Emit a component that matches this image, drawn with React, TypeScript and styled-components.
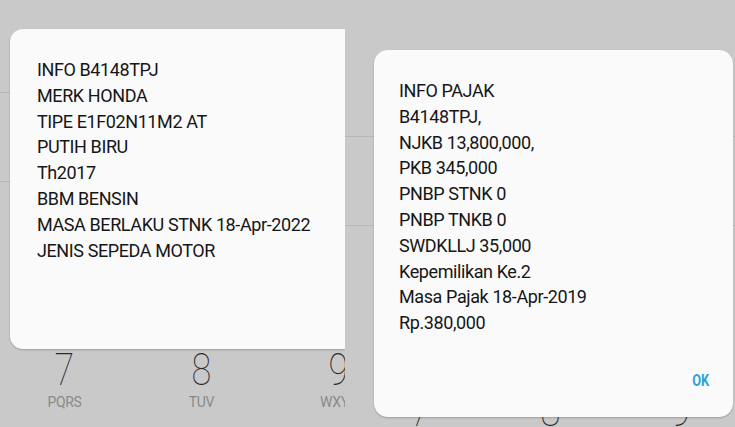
import * as React from 'react';
import styled, { createGlobalStyle } from 'styled-components';

const GlobalStyle = createGlobalStyle`
  html, body {
    margin: 0;
    padding: 0;
    background: #c9c9c9;
  }
  body {
    font-family: Roboto, "Noto Sans", "Liberation Sans", sans-serif;
    -webkit-font-smoothing: antialiased;
  }
`;

interface Key {
  digit: string;
  letters: string;
}

const keys: Key[] = [
  { digit: '7', letters: 'PQRS' },
  { digit: '8', letters: 'TUV' },
  { digit: '9', letters: 'WXYZ' }
];

const vehicleInfo = [
  'INFO B4148TPJ',
  'MERK HONDA',
  'TIPE E1F02N11M2 AT',
  'PUTIH BIRU',
  'Th2017',
  'BBM BENSIN',
  'MASA BERLAKU STNK 18-Apr-2022',
  'JENIS SEPEDA MOTOR'
];

const taxInfo = [
  'INFO PAJAK',
  'B4148TPJ,',
  'NJKB 13,800,000,',
  'PKB 345,000',
  'PNBP STNK 0',
  'PNBP TNKB 0',
  'SWDKLLJ 35,000',
  'Kepemilikan Ke.2',
  'Masa Pajak 18-Apr-2019',
  'Rp.380,000'
];

const App = () => (
  <>
    <GlobalStyle />
    <Page>
      <Screen width={345}>
        <Underlay>
          <Field height={92} />
          <Field height={88} />
          <Dialpad offset={-4} column={137} top={168}>
            {keys.map(key => (
              <DialKey key={key.digit}>
                <Digit>{key.digit}</Digit>
                <Letters>{key.letters}</Letters>
              </DialKey>
            ))}
          </Dialpad>
        </Underlay>
        <Dialog top={29} left={10} right={0} height={320} cut>
          <Message>
            {vehicleInfo.map(line => (
              <Line key={line}>{line}</Line>
            ))}
          </Message>
        </Dialog>
      </Screen>
      <Screen width={390}>
        <Underlay>
          <Field height={136} />
          <Field height={88} />
          <Dialpad offset={10} column={130} top={165}>
            {keys.map(key => (
              <DialKey key={key.digit}>
                <Digit>{key.digit}</Digit>
                <Letters>{key.letters}</Letters>
              </DialKey>
            ))}
          </Dialpad>
        </Underlay>
        <Dialog top={50} left={29} right={2} height={367}>
          <Message>
            {taxInfo.map(line => (
              <Line key={line}>{line}</Line>
            ))}
          </Message>
          <Actions>
            <OkButton>OK</OkButton>
          </Actions>
        </Dialog>
      </Screen>
    </Page>
  </>
);

const Page = styled.div`
  display: flex;
  width: 735px;
  height: 427px;
  overflow: hidden;
  background: #c9c9c9;
`;

const Screen = styled.div<{ width: number }>`
  position: relative;
  flex: 0 0 ${p => p.width}px;
  height: 427px;
  overflow: hidden;
`;

const Underlay = styled.div`
  display: flex;
  flex-direction: column;
`;

const Field = styled.div<{ height: number }>`
  height: ${p => p.height}px;
  border-bottom: 1px solid #b7b7b7;
`;

const Dialpad = styled.div<{ offset: number; column: number; top: number }>`
  display: grid;
  grid-template-columns: repeat(3, ${p => p.column}px);
  margin-top: ${p => p.top}px;
  margin-left: ${p => p.offset}px;
`;

const DialKey = styled.div`
  display: flex;
  flex-direction: column;
  align-items: center;
`;

const Digit = styled.span`
  font-size: 45px;
  line-height: 40px;
  font-weight: 100;
  color: #2a2a2a;
  transform: scaleX(0.8);
`;

const Letters = styled.span`
  margin-top: 4px;
  font-size: 14px;
  line-height: 16px;
  color: #8a8a8a;
  letter-spacing: -0.3px;
`;

const Dialog = styled.div<{
  top: number;
  left: number;
  right: number;
  height: number;
  cut?: boolean;
}>`
  position: absolute;
  top: ${p => p.top}px;
  left: ${p => p.left}px;
  right: ${p => p.right}px;
  height: ${p => p.height}px;
  box-sizing: border-box;
  display: flex;
  flex-direction: column;
  padding: 28px 24px 26px ${p => (p.cut ? 27 : 25)}px;
  background: #fafafa;
  border-radius: ${p => (p.cut ? '13px 0 0 13px' : '14px')};
  box-shadow: 0 1px 2px rgba(0, 0, 0, 0.22);
`;

const Message = styled.div`
  flex: 1;
  display: flex;
  flex-direction: column;
`;

const Line = styled.div`
  font-size: 18px;
  line-height: 25.8px;
  color: #161616;
  letter-spacing: -0.4px;
  white-space: nowrap;
`;

const Actions = styled.div`
  display: flex;
  justify-content: flex-end;
`;

const OkButton = styled.span`
  font-size: 16px;
  line-height: 20px;
  font-weight: 700;
  color: #2ea3d9;
  transform: scaleX(0.8);
  transform-origin: right center;
`;

export default App;
